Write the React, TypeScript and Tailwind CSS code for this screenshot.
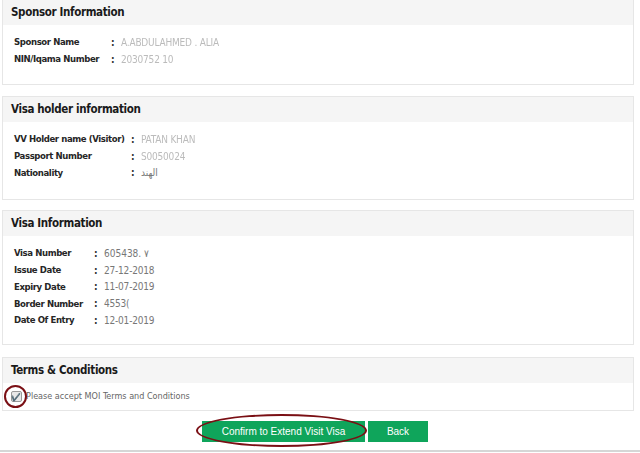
import React from 'react';

type Row = { label: string; value: string; blur?: boolean };

const sponsorRows: Row[] = [
  { label: 'Sponsor Name', value: 'A.ABDULAHMED . ALIA', blur: true },
  { label: 'NIN/Iqama Number', value: '2030752 10', blur: true },
];

const holderRows: Row[] = [
  { label: 'VV Holder name (Visitor)', value: 'PATAN      KHAN', blur: true },
  { label: 'Passport Number', value: 'S0050024', blur: true },
  { label: 'Nationality', value: 'الهند' },
];

const visaRows: Row[] = [
  { label: 'Visa Number', value: '605438. ٧' },
  { label: 'Issue Date', value: '27-12-2018' },
  { label: 'Expiry Date', value: '11-07-2019' },
  { label: 'Border Number', value: '4553(' },
  { label: 'Date Of Entry', value: '12-01-2019' },
];

const font = "font-['DejaVu_Sans_Condensed','DejaVu_Sans',sans-serif]";

function Panel({ title, children, className = '' }: { title: string; children: React.ReactNode; className?: string }) {
  return (
    <div className={`border border-[#e6e6e6] bg-white ${className}`}>
      <div className={`bg-[#f5f5f5] h-[25px] flex items-center px-[8px] text-[11.5px] tracking-[-0.35px] font-bold text-[#1a1a1a] ${font}`}>
        {title}
      </div>
      {children}
    </div>
  );
}

function InfoRows({ rows, labelWidth }: { rows: Row[]; labelWidth: string }) {
  return (
    <div className="pt-[9px] pb-[18px] pl-[11px]">
      {rows.map((r) => (
        <div key={r.label} className="flex items-center h-[16.8px] whitespace-nowrap">
          <span className={`${labelWidth} shrink-0 text-[9.5px] tracking-[-0.4px] font-bold text-[#262626] ${font}`}>
            {r.label}
          </span>
          <span className={`w-[10px] shrink-0 text-[10px] font-bold text-[#333] ${font}`}>:</span>
          <span
            className={`${font} text-[10px] tracking-[-0.2px] ${r.blur ? 'text-[#bbb] blur-[0.6px]' : 'text-[#777]'}`}
          >
            {r.value}
          </span>
        </div>
      ))}
    </div>
  );
}

export default function App() {
  return (
    <div className="w-[640px] h-[453px] bg-white overflow-hidden relative">
      <div className="flex flex-col pl-[2px] w-[634px]">
        <Panel title="Sponsor Information" className="border-t-0 h-[85px]">
          <InfoRows rows={sponsorRows} labelWidth="w-[97px]" />
        </Panel>

        <Panel title="Visa holder information" className="mt-[11px] h-[104px]">
          <InfoRows rows={holderRows} labelWidth="w-[117px]" />
        </Panel>

        <Panel title="Visa Information" className="mt-[10px] h-[135px]">
          <InfoRows rows={visaRows} labelWidth="w-[80px]" />
        </Panel>

        <Panel title="Terms & Conditions" className="mt-[12px] h-[54px]">
          <div className="relative flex items-center h-[27px] pl-[8px]">
            <span className="w-[11px] h-[11px] border border-[#999] bg-[#e8e8e8] rounded-[2px] flex items-center justify-center text-[8px] leading-none text-[#222]">
              ✔
            </span>
            <span className={`ml-[4px] text-[9px] text-[#666] ${font}`}>
              Please accept MOI Terms and Conditions
            </span>
            <span className="absolute left-[1px] top-[2px] w-[23px] h-[23px] rounded-full border-[2.5px] border-[#7a0f14]" />
          </div>
        </Panel>

        <div className="flex items-start justify-center gap-[3px] mt-[10px] pr-[6px]">
          <div className="relative">
            <button className="block w-[163px] h-[21px] bg-[#0fa55b] text-white text-[10px] leading-[21px] font-['Liberation_Sans',Arial,sans-serif]">
              Confirm to Extend Visit Visa
            </button>
            <span className="absolute left-[-6px] top-[-7px] w-[171px] h-[33px] rounded-[50%] border-[2.5px] border-[#7a0f14]" />
          </div>
          <button className="block w-[60px] h-[21px] bg-[#0fa55b] text-white text-[10px] leading-[21px] font-['Liberation_Sans',Arial,sans-serif]">
            Back
          </button>
        </div>
      </div>
      <div className="absolute left-0 right-0 top-[450px] h-[2px] bg-[#d6d6d6]" />
    </div>
  );
}
